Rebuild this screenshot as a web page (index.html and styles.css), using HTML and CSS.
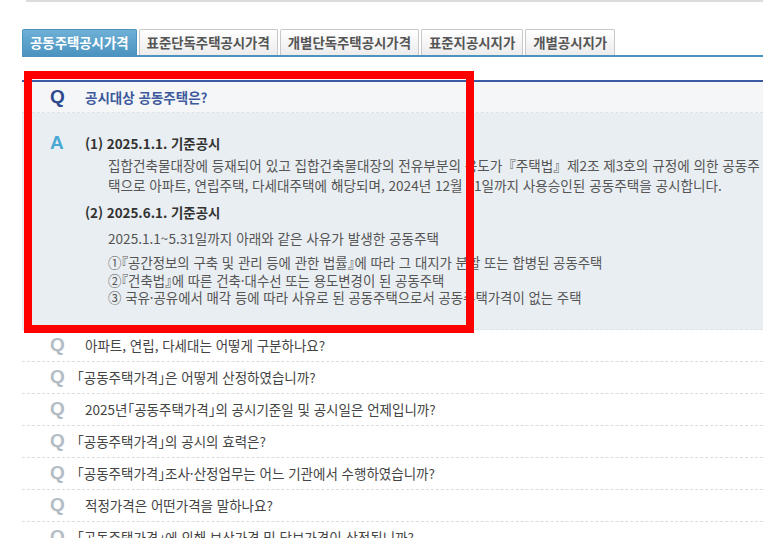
FILE: index.html
```html
<!DOCTYPE html>
<html lang="ko">
<head>
<meta charset="utf-8">
<link rel="stylesheet" href="styles.css">
</head>
<body>
<div class="topline"></div>
<ul class="tabs">
  <li class="tab active">공동주택공시가격</li>
  <li class="tab">표준단독주택공시가격</li>
  <li class="tab">개별단독주택공시가격</li>
  <li class="tab">표준지공시지가</li>
  <li class="tab">개별공시지가</li>
</ul>
<div class="faq">
  <div class="qrow open">
    <span class="qicon">Q</span>
    <span class="qtext">공시대상 공동주택은?</span>
  </div>
  <div class="answer">
    <div class="ahead">
      <span class="aicon">A</span>
      <span class="atitle">(1) 2025.1.1. 기준공시</span>
    </div>
    <p class="apara">집합건축물대장에 등재되어 있고 집합건축물대장의 전유부분의 용도가『주택법』제2조 제3호의 규정에 의한 공동주택으로 아파트, 연립주택, 다세대주택에 해당되며, 2024년 12월 31일까지 사용승인된 공동주택을 공시합니다.</p>
    <div class="ahead second">
      <span class="atitle">(2) 2025.6.1. 기준공시</span>
    </div>
    <p class="apara">2025.1.1~5.31일까지 아래와 같은 사유가 발생한 공동주택</p>
    <ul class="alist">
      <li>①『공간정보의 구축 및 관리 등에 관한 법률』에 따라 그 대지가 분할 또는 합병된 공동주택</li>
      <li>②『건축법』에 따른 건축·대수선 또는 용도변경이 된 공동주택</li>
      <li>③ 국유·공유에서 매각 등에 따라 사유로 된 공동주택으로서 공동주택가격이 없는 주택</li>
    </ul>
  </div>
  <div class="qrow"><span class="qicon grey">Q</span><span class="qtext plain sp">아파트, 연립, 다세대는 어떻게 구분하나요?</span></div>
  <div class="qrow"><span class="qicon grey">Q</span><span class="qtext plain">「공동주택가격」은 어떻게 산정하였습니까?</span></div>
  <div class="qrow"><span class="qicon grey">Q</span><span class="qtext plain sp">2025년「공동주택가격」의 공시기준일 및 공시일은 언제입니까?</span></div>
  <div class="qrow"><span class="qicon grey">Q</span><span class="qtext plain">「공동주택가격」의 공시의 효력은?</span></div>
  <div class="qrow"><span class="qicon grey">Q</span><span class="qtext plain">「공동주택가격」조사·산정업무는 어느 기관에서 수행하였습니까?</span></div>
  <div class="qrow"><span class="qicon grey">Q</span><span class="qtext plain sp">적정가격은 어떤가격을 말하나요?</span></div>
  <div class="qrow"><span class="qicon grey">Q</span><span class="qtext plain">「공동주택가격」에 의해 보상가격 및 담보가격이 산정됩니까?</span></div>
</div>
<div class="highlight"></div>
</body>
</html>
```
FILE: styles.css
```css
html, body {
  margin: 0;
  padding: 0;
  overflow: hidden;
  background: #fff;
}
body {
  font-family: "Noto Sans CJK KR", "Noto Sans", sans-serif;
  font-feature-settings: "halt";
  color: #444;
  width: 763px;
  height: 538px;
  position: relative;
}
.topline {
  margin-left: 26px;
  border-top: 2px solid #dcdcdc;
}
.tabs {
  list-style: none;
  margin: 27px 0 0 22px;
  padding: 0;
  display: flex;
  gap: 2px;
  border-bottom: 2px solid #4b94c0;
}
.tab {
  height: 25px;
  line-height: 25px;
  padding: 0 7px;
  font-size: 13.4px;
  font-weight: 700;
  color: #555;
  background: linear-gradient(#ffffff, #ececec);
  border: 1px solid #c8c8c8;
  border-bottom: none;
  border-radius: 2px 2px 0 0;
}
.tab.active {
  color: #fff;
  background: linear-gradient(#6fb0d6, #4b94c0);
  border-color: #4b94c0;
}
.faq {
  margin: 23px 0 0 22px;
  border-top: 2px solid #3b5aa3;
}
.qrow {
  display: flex;
  align-items: center;
  height: 31px;
  border-bottom: 1px dashed #dcdcdc;
  padding-left: 28px;
}
.qrow.open {
  height: 30px;
  background: #f4f6f8;
  border-bottom-color: #dde2e6;
}
.qicon {
  width: 27px;
  font-family: "Liberation Sans", Arial, sans-serif;
  font-weight: 700;
  font-size: 19px;
  color: #2e4a8e;
}
.qicon.grey {
  color: #b4bdc5;
}
.qtext {
  font-size: 13.5px;
  font-weight: 700;
  color: #3d5a9c;
  padding-left: 8px;
}
.qtext.plain {
  font-weight: 400;
  color: #444;
  padding-left: 0;
}
.qtext.sp {
  padding-left: 8px;
}
.answer {
  background: #e9eef2;
  padding: 20px 0 22px 28px;
  border-bottom: 1px dashed #dde2e6;
}
.ahead {
  display: flex;
  align-items: center;
  height: 20px;
}
.ahead.second {
  margin-top: 7px;
  padding-left: 35px;
}
.aicon {
  width: 35px;
  font-family: "Liberation Sans", Arial, sans-serif;
  font-weight: 700;
  font-size: 19px;
  color: #4aa9d3;
}
.atitle {
  font-size: 13.4px;
  font-weight: 700;
  color: #333;
}
.apara {
  margin: 2px 0 0 58px;
  font-size: 13.6px;
  font-feature-settings: normal;
  line-height: 20px;
  color: #555;
}
.ahead.second + .apara {
  margin-top: 6px;
}
.alist {
  list-style: none;
  margin: 6px 0 0 58px;
  padding: 0;
  font-size: 13.4px;
  line-height: 17.5px;
  color: #555;
}
.highlight {
  position: absolute;
  left: 24px;
  top: 71px;
  width: 434px;
  height: 246px;
  border: 8px solid #ff0000;
}
```
